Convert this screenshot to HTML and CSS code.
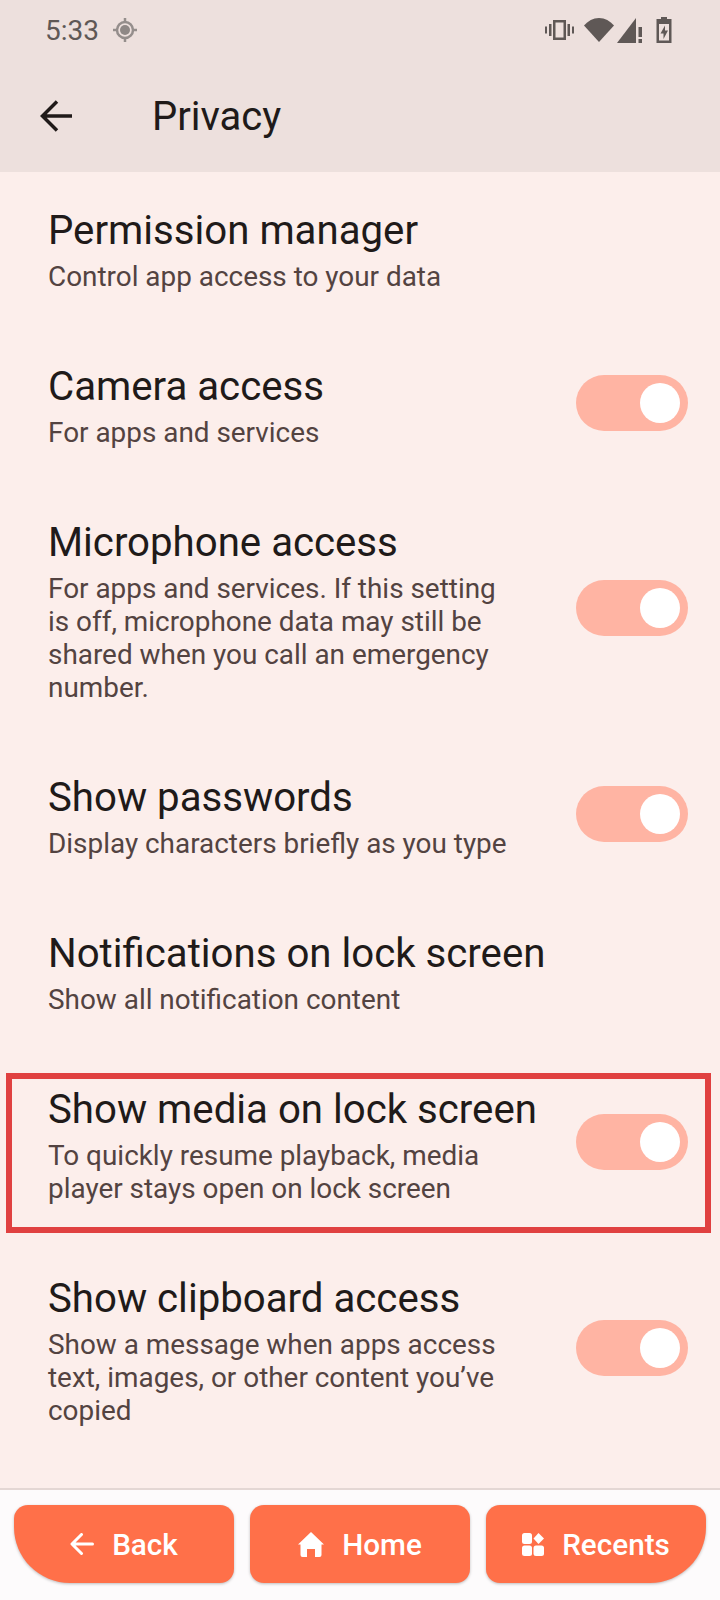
FILE: index.html
```html
<!DOCTYPE html>
<html lang="en">
<head>
  <meta charset="UTF-8" />
  <meta name="viewport" content="width=device-width, initial-scale=1.0" />
  <title>Privacy</title>
  <link rel="stylesheet" href="styles.css">
</head>
<body>
  <div class="phone">
    <div class="top">
      <div class="status-bar">
        <div class="status-left">
          <span class="clock">5:33</span>
          <svg class="gps" width="24" height="24" viewBox="0 0 24 24">
            <circle cx="12" cy="12" r="8" fill="none" stroke="#958e8c" stroke-width="2.500"/>
            <circle cx="12" cy="12" r="5" fill="#8f8886"/>
            <path d="M12 0v4M12 20v4M0 12h4M20 12h4" stroke="#958e8c" stroke-width="2.500"/>
          </svg>
        </div>
        <div class="status-right">
          <svg class="icon-vibrate" width="29" height="20" viewBox="0 0 29 20" fill="#5f5856">
            <path d="M8 0h13v20H8zM10.500 2.500v15h8v-15z" fill-rule="evenodd"/>
            <path d="M4 4h2.500v12H4zM22.500 4H25v12h-2.500zM0 6.500h2v7H0zM27 6.500h2v7h-2z"/>
          </svg>
          <svg class="icon-wifi" width="30" height="24" viewBox="0 0 30 24" fill="#5f5856">
            <path d="M15 24 0 7.500C4 3 9 0 15 0s11 3 15 7.500z"/>
          </svg>
          <svg class="icon-signal" width="25" height="25" viewBox="0 0 25 25" fill="#5f5856">
            <path d="M0 25 19 0v25z"/>
            <path d="M21.500 9H25v10h-3.500zM21.500 21H25v4h-3.500z"/>
          </svg>
          <svg class="icon-battery" width="16" height="26" viewBox="0 0 16 26" fill="#5f5856">
            <path d="M5 0h6v2h4.500v24H.5V2H5zM3 7v16.500h10V7z" fill-rule="evenodd"/>
            <path d="M9 8.500 4.500 16.500H7.500V22L12 13.500H9z"/>
          </svg>
        </div>
      </div>
      <div class="app-bar">
        <svg class="back-arrow" width="32" height="32" viewBox="0 0 32 32">
          <path d="M32 16H3M17 1.500 2.500 16 17 30.500" fill="none" stroke="#201a19" stroke-width="3.500"/>
        </svg>
        <h1>Privacy</h1>
      </div>
    </div>

    <div class="list">
      <div class="row">
        <div class="row-text">
          <div class="title">Permission manager</div>
          <div class="desc">Control app access to your data</div>
        </div>
      </div>
      <div class="row">
        <div class="row-text">
          <div class="title">Camera access</div>
          <div class="desc">For apps and services</div>
        </div>
        <div class="toggle"><span class="knob"></span></div>
      </div>
      <div class="row">
        <div class="row-text">
          <div class="title">Microphone access</div>
          <div class="desc">For apps and services. If this setting is off, microphone data may still be shared when you call an emergency number.</div>
        </div>
        <div class="toggle"><span class="knob"></span></div>
      </div>
      <div class="row">
        <div class="row-text">
          <div class="title">Show passwords</div>
          <div class="desc">Display characters briefly as you type</div>
        </div>
        <div class="toggle"><span class="knob"></span></div>
      </div>
      <div class="row">
        <div class="row-text">
          <div class="title">Notifications on lock screen</div>
          <div class="desc">Show all notification content</div>
        </div>
      </div>
      <div class="row row-marked">
        <div class="row-text">
          <div class="title">Show media on lock screen</div>
          <div class="desc">To quickly resume playback, media player stays open on lock screen</div>
        </div>
        <div class="toggle"><span class="knob"></span></div>
      </div>
      <div class="row">
        <div class="row-text">
          <div class="title">Show clipboard access</div>
          <div class="desc">Show a message when apps access text, images, or other content you’ve copied</div>
        </div>
        <div class="toggle"><span class="knob"></span></div>
      </div>
    </div>

    <div class="bottom-bar">
      <button class="nav-button nav-left">
        <svg width="24" height="22" viewBox="0 0 24 22"><path d="M22.500 11H3M11.500 1.500 2 11l9.500 9.500" fill="none" stroke="#fff" stroke-width="3" stroke-linecap="round" stroke-linejoin="round"/></svg>
        Back
      </button>
      <button class="nav-button">
        <svg width="26" height="25" viewBox="0 0 26 25"><path d="M13 0 26 12.500h-2.500v10.500a2 2 0 0 1-2 2H17v-8H9v8H4.500a2 2 0 0 1-2-2V12.500H0z" fill="#fff"/></svg>
        Home
      </button>
      <button class="nav-button nav-right">
        <svg width="22" height="23" viewBox="0 0 22 23" fill="#fff">
          <rect x="0" y="0" width="10" height="11" rx="2.500"/>
          <path d="M16.500 0 22 5.500 16.500 11 11.500 5.500z"/>
          <rect x="0" y="12.500" width="10" height="10.500" rx="2.500"/>
          <rect x="11.500" y="12.500" width="10.500" height="10.500" rx="2.500"/>
        </svg>
        Recents
      </button>
    </div>
  </div>
</body>
</html>
```

FILE: styles.css
```css
body {
  margin: 0;
  background-color: #fceeeb;
  font-family: Roboto, "Noto Sans", sans-serif;
  color: #201a19;
}

.phone {
  width: 720px;
  height: 1600px;
  display: flex;
  flex-direction: column;
  overflow: hidden;
}

.top {
  height: 172px;
  background-color: #ede0dd;
  flex-shrink: 0;
}

.status-bar {
  height: 60px;
  padding: 0 48px 0 45px;
  display: flex;
  justify-content: space-between;
  align-items: center;
}

.status-left {
  display: flex;
  align-items: center;
  gap: 14px;
}

.clock {
  font-size: 28px;
  color: #5f5856;
}

.status-right {
  display: flex;
  align-items: center;
}

.icon-wifi {
  margin-left: 10px;
}

.icon-signal {
  margin-left: 3px;
}

.icon-battery {
  margin-left: 14px;
}

.app-bar {
  display: flex;
  align-items: center;
  height: 112px;
  padding-left: 40px;
}

.app-bar h1 {
  margin: 0 0 0 80px;
  font-size: 40px;
  font-weight: 400;
}

.list {
  flex: 1;
  min-height: 0;
  display: flex;
  flex-direction: column;
}

.row {
  display: flex;
  justify-content: space-between;
  align-items: center;
  padding: 35px 32px 35px 48px;
  flex-shrink: 0;
}

.row-text {
  width: 470px;
}

.title {
  font-size: 40.2px;
  line-height: 48px;
  white-space: nowrap;
}

.desc {
  margin-top: 5px;
  font-size: 27.9px;
  line-height: 33px;
  color: #534341;
}

.row-marked {
  position: relative;
}

.row-marked::after {
  content: "";
  position: absolute;
  left: 6px;
  right: 9px;
  top: 22px;
  bottom: 7px;
  border: 6px solid #e04040;
}

.toggle {
  width: 112px;
  height: 56px;
  margin-bottom: 7px;
  border-radius: 28px;
  background-color: #ffb4a3;
  display: flex;
  align-items: center;
  justify-content: flex-end;
  padding-right: 8px;
  box-sizing: border-box;
}

.knob {
  width: 40px;
  height: 40px;
  border-radius: 50%;
  background-color: #fff;
}

.bottom-bar {
  height: 112px;
  flex-shrink: 0;
  box-sizing: border-box;
  border-top: 2px solid #e4d7d4;
  background-color: #fdfbfc;
  padding: 15px 14px 0;
  display: flex;
  gap: 16px;
}

.nav-button {
  flex: 1;
  height: 78px;
  display: flex;
  align-items: center;
  justify-content: center;
  gap: 18px;
  border: none;
  border-radius: 14px;
  background-color: #ff7049;
  color: #fff;
  font-family: Roboto, sans-serif;
  font-size: 29.7px;
  font-weight: 500;
  box-shadow: 0 1px 3px rgba(0, 0, 0, 0.25);
}

.nav-left {
  border-bottom-left-radius: 56px;
}

.nav-right {
  border-bottom-right-radius: 56px;
}
```
